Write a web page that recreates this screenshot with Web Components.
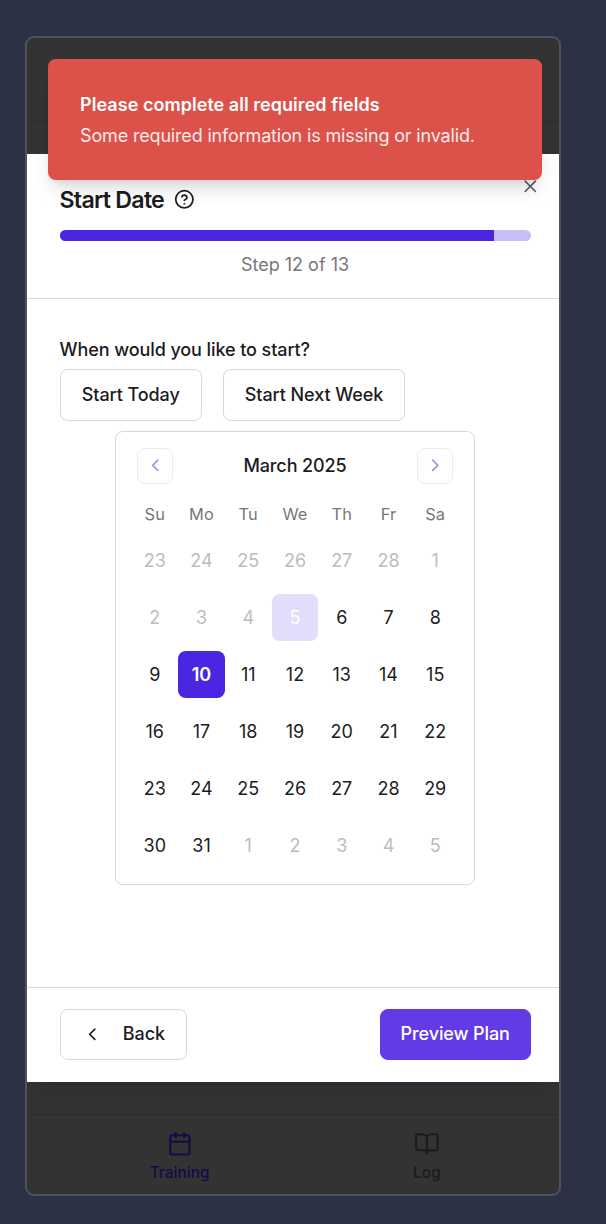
<!DOCTYPE html>
<html lang="en">
<head>
<meta charset="utf-8">
<title>Start Date</title>
<style>
html,body{margin:0;height:100%}
body{background:#2d3144;font-family:Inter,"Liberation Sans",sans-serif;color:#1c1c1e;font-size:18px;overflow:hidden}
</style>
</head>
<body>
<plan-app></plan-app>
<script>
function define(name, html, setup) {
  const t = document.createElement('template');
  t.innerHTML = '<style>*{box-sizing:border-box}svg{display:block;fill:none;stroke:currentColor;stroke-linecap:round;stroke-linejoin:round;stroke-width:2}</style>' + html;
  customElements.define(name, class extends HTMLElement {
    connectedCallback() {
      if (this.shadowRoot) return;
      const root = this.attachShadow({ mode: 'open' });
      root.append(t.content.cloneNode(true));
      if (setup) setup(this, root);
    }
  });
}

define('ui-button', `
<style>
:host{display:inline-flex;box-sizing:border-box;height:51.6px;border:1.3px solid #d8d8da;border-radius:7.8px;align-items:center;justify-content:center;font-weight:500;letter-spacing:-.09px;white-space:nowrap;line-height:26px;background:#fff}
:host([primary]){background:#623be6;border-color:#623be6;color:#fff}
</style><slot></slot>`);

define('toast-alert', `
<style>
:host{display:flex;flex-direction:column;gap:5px;box-sizing:border-box;height:121.8px;padding:33px 32.4px;background:#dc524a;border-radius:7.7px;color:#fff;box-shadow:0 13px 19px -4px rgba(0,0,0,.13),0 5px 8px -5px rgba(0,0,0,.12);white-space:nowrap;line-height:26px}
.t{font-weight:600;letter-spacing:.04px}
.d{opacity:.88;letter-spacing:-.17px}
</style><div class="t"><slot name="title"></slot></div><div class="d"><slot></slot></div>`);

define('step-progress', `
<style>
:host{display:block;height:10.4px;border-radius:6px;overflow:hidden;background:#c8bdf6}
div{height:100%;background:#4b26e2}
</style><div></div>`, (el, r) => {
  r.querySelector('div').style.width = (el.getAttribute('value') / el.getAttribute('max') * 100) + '%';
});

define('date-calendar', `
<style>
:host{display:block;box-sizing:border-box;width:359.8px;height:454px;border:1.3px solid #d8d8da;border-radius:7.8px;padding:15.4px 15.3px}
header{display:flex;justify-content:space-between;align-items:center;padding:0 5.2px;height:36px;font-weight:500;letter-spacing:-.1px}
.nav{width:36px;height:36px;border:1.3px solid #ececed;border-radius:7.7px;color:#a592f0;display:grid;place-items:center}
.nav svg{width:20.6px;height:20.6px}
.prev svg{margin-left:1px}
.week{display:grid;grid-template-columns:repeat(7,1fr);text-align:center}
.names{font-size:16.4px;color:#77777a;margin-top:20.5px;height:20px;line-height:20px;letter-spacing:.1px}
.days{margin-top:13px;row-gap:10.4px}
.day{height:46.6px;line-height:48.6px;border-radius:7.7px}
.mute{color:#bcbcbe}
.today{background:#e4dcfb;color:#fff}
.sel{background:#4b26e2;color:#fff;font-weight:600}
</style>
<header><span class="nav prev"><svg viewBox="0 0 24 24"><path d="m15 18-6-6 6-6"/></svg></span><slot></slot><span class="nav"><svg viewBox="0 0 24 24"><path d="m9 18 6-6-6-6"/></svg></span></header>
<div class="week names"></div><div class="week days"></div>`, (el, r) => {
  r.querySelector('.names').innerHTML = ['Su','Mo','Tu','We','Th','Fr','Sa'].map(d => `<span>${d}</span>`).join('');
  let out = '';
  for (let i = -5; i <= 36; i++) {
    const n = i <= 0 ? i + 28 : i > 31 ? i - 31 : i;
    const c = i === 5 ? 'today' : i === 10 ? 'sel' : (i < 5 || i > 31) ? 'mute' : '';
    out += `<span class="day ${c}">${n}</span>`;
  }
  r.querySelector('.days').innerHTML = out;
});

define('nav-item', `
<style>
:host{display:flex;flex-direction:column;align-items:center;padding-top:16px;font-size:15.4px;font-weight:500;line-height:20px;gap:6.5px;letter-spacing:.05px}
::slotted(svg){display:block;width:25.7px;height:25.7px;fill:none;stroke:currentColor;stroke-width:2;stroke-linecap:round;stroke-linejoin:round}
</style><slot name="icon"></slot><slot></slot>`);

define('tab-bar', `
<style>
:host{display:grid;grid-template-columns:1fr 1fr;box-sizing:border-box;height:80.5px;border-top:1.3px solid #2b2b2b;padding:0 8.4px 0 29px}
nav-item{color:#1b1b1b}
nav-item.on{color:#150b45}
</style>
<nav-item class="on"><svg slot="icon" viewBox="0 0 24 24"><path d="M8 2v4M16 2v4"/><rect x="3" y="4" width="18" height="18" rx="2"/><path d="M3 10h18"/></svg>Training</nav-item>
<nav-item><svg slot="icon" viewBox="0 0 24 24"><path d="M12 7v14M3 18a1 1 0 0 1-1-1V4a1 1 0 0 1 1-1h5a4 4 0 0 1 4 4 4 4 0 0 1 4-4h5a1 1 0 0 1 1 1v13a1 1 0 0 1-1 1h-6a3 3 0 0 0-3 3 3 3 0 0 0-3-3z"/></svg>Log</nav-item>`);

define('plan-dialog', `
<style>
:host{display:flex;flex-direction:column;height:928px;background:#fff;position:relative;box-shadow:0 13px 20px -8px rgba(0,0,0,.14)}
.head{height:144.8px;border-bottom:1.3px solid #d8d8da;padding:30px 28.5px 0 32.5px}
.title{display:flex;align-items:center;height:32px;font-size:23.2px;font-weight:600;white-space:nowrap}
.title span{letter-spacing:-.75px}
.title svg{width:20.7px;height:20.7px;margin-left:10.2px;margin-top:-1px}
step-progress{margin-top:14.3px}
.step{text-align:center;color:#77777a;line-height:26px;margin-top:11.4px;letter-spacing:0}
.close{position:absolute;right:18.2px;top:22.2px;width:20.6px;height:20.6px;color:#58585a}
.body{flex:1;padding:38px 28.5px 0 32.5px}
.q{font-weight:500;line-height:26px;letter-spacing:-.09px}
.quick{display:flex;gap:20.8px;margin-top:6.5px}
date-calendar{margin:10.4px auto 0}
.foot{height:95.4px;border-top:1.3px solid #d8d8da;padding:21px 28.5px 0 32.5px;display:flex;justify-content:space-between}
.foot svg{width:20.6px;height:20.6px;margin-right:20.5px;stroke-width:1.9}
</style>
<div class="head">
<div class="title"><span>Start Date</span><svg viewBox="0 0 24 24"><circle cx="12" cy="12" r="10"/><path d="M9.09 9a3 3 0 0 1 5.83 1c0 2-3 3-3 3M12 17h.01"/></svg></div>
<step-progress value="12" max="13"></step-progress>
<div class="step">Step 12 of 13</div>
</div>
<svg class="close" viewBox="0 0 24 24" style="stroke-width:1.8"><path d="M18 6 6 18M6 6l12 12"/></svg>
<div class="body">
<div class="q">When would you like to start?</div>
<div class="quick"><ui-button style="width:142.4px">Start Today</ui-button><ui-button style="width:182.6px">Start Next Week</ui-button></div>
<date-calendar>March 2025</date-calendar>
</div>
<div class="foot"><ui-button style="width:127.6px"><svg viewBox="0 0 24 24"><path d="m15 18-6-6 6-6"/></svg>Back</ui-button><ui-button primary style="width:150.6px">Preview Plan</ui-button></div>`);

define('plan-app', `
<style>
:host{display:block;padding:36px 0 0 25px}
.phone{position:relative;width:536px;height:1160px;border:2px solid #4d5267;border-radius:9px;background:#333;overflow:hidden;display:flex;flex-direction:column}
.top{height:84px;border-bottom:1.3px solid #2b2b2b}
plan-dialog{margin-top:32px;flex:none}
tab-bar{margin-top:auto}
toast-alert{position:absolute;left:20.7px;top:20.7px;width:494.6px}
</style>
<div class="phone"><div class="top"></div><plan-dialog></plan-dialog><tab-bar></tab-bar>
<toast-alert><span slot="title">Please complete all required fields</span>Some required information is missing or invalid.</toast-alert></div>`);
</script>
</body>
</html>
